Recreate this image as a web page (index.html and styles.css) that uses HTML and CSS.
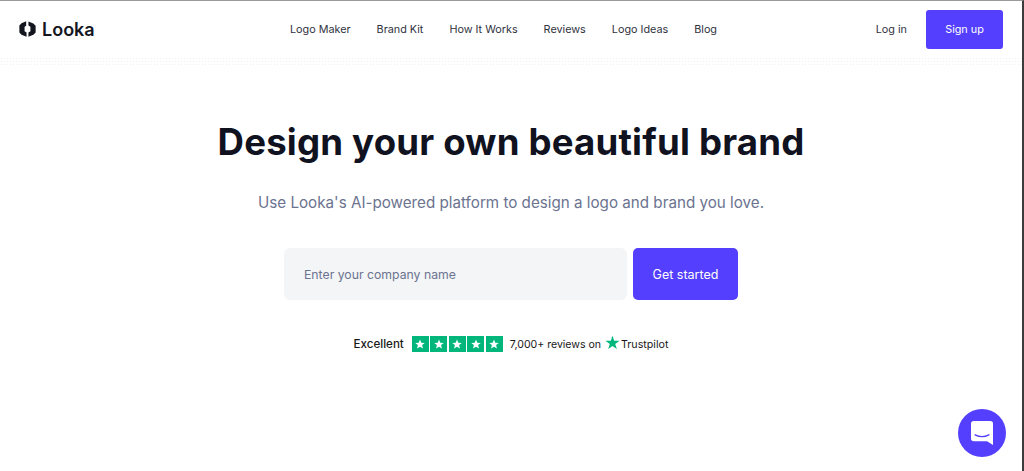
FILE: index.html
```html
<!DOCTYPE html>
<html>
<head>
    <title>Looka</title>
    <link rel="stylesheet" href="styles.css">
</head>
<body>
    <header class="topbar">
        <a class="brand" href="#">
            <svg class="brand-mark" viewBox="0 0 18 18" preserveAspectRatio="none">
                <path d="M7.6 .4V5.4L5.9 6.6V11.4L8 13V17.6L2.6 15.4L.4 12.8V5L2.6 2.6Z"/>
                <path d="M10 .6L15.2 2.8L17.6 5.4V12.8L15.2 15.4L10 17.6V13L12.1 11.4V6.6L10 5.2Z"/>
            </svg>
            <span>Looka</span>
        </a>
        <nav class="nav">
            <a href="#">Logo Maker</a>
            <a href="#">Brand Kit</a>
            <a href="#">How It Works</a>
            <a href="#">Reviews</a>
            <a href="#">Logo Ideas</a>
            <a href="#">Blog</a>
        </nav>
        <div class="account">
            <a href="#">Log in</a>
            <a class="signup" href="#">Sign up</a>
        </div>
    </header>
    <div class="dither"></div>

    <main class="hero">
        <h1>Design your own beautiful brand</h1>
        <p class="lead">Use Looka's AI-powered platform to design a logo and brand you love.</p>

        <form class="name-form">
            <input type="text" placeholder="Enter your company name">
            <button type="button">Get started</button>
        </form>

        <div class="reviews">
            <strong>Excellent</strong>
            <div class="stars">
                <span class="star-box"><svg viewBox="0 0 24 24"><path d="M12 3l2.6 6.3 6.9.5-5.3 4.4 1.7 6.7L12 17.3 6.1 20.9l1.7-6.7-5.3-4.4 6.9-.5z"/></svg></span>
                <span class="star-box"><svg viewBox="0 0 24 24"><path d="M12 3l2.6 6.3 6.9.5-5.3 4.4 1.7 6.7L12 17.3 6.1 20.9l1.7-6.7-5.3-4.4 6.9-.5z"/></svg></span>
                <span class="star-box"><svg viewBox="0 0 24 24"><path d="M12 3l2.6 6.3 6.9.5-5.3 4.4 1.7 6.7L12 17.3 6.1 20.9l1.7-6.7-5.3-4.4 6.9-.5z"/></svg></span>
                <span class="star-box"><svg viewBox="0 0 24 24"><path d="M12 3l2.6 6.3 6.9.5-5.3 4.4 1.7 6.7L12 17.3 6.1 20.9l1.7-6.7-5.3-4.4 6.9-.5z"/></svg></span>
                <span class="star-box"><svg viewBox="0 0 24 24"><path d="M12 3l2.6 6.3 6.9.5-5.3 4.4 1.7 6.7L12 17.3 6.1 20.9l1.7-6.7-5.3-4.4 6.9-.5z"/></svg></span>
            </div>
            <span class="count">7,000+ reviews on</span>
            <span class="trustpilot">
                <svg viewBox="0 0 24 24"><path d="M12 1l2.7 8.2h8.6l-7 5.1 2.7 8.2-7-5.1-7 5.1 2.7-8.2-7-5.1h8.6z"/></svg>
                Trustpilot
            </span>
        </div>
    </main>

    <button class="chat" type="button" aria-label="Chat">
        <svg viewBox="0 0 24 26">
            <path d="M3 0H21A3 3 0 0 1 24 3V26L17.5 22H3A3 3 0 0 1 0 19V3A3 3 0 0 1 3 0Z" fill="#fff"/>
            <path d="M4.5 15Q12 19 19.5 15" fill="none" stroke="#533ffd" stroke-width="1.5" stroke-linecap="round"/>
        </svg>
    </button>
</body>
</html>
```

FILE: styles.css
```css
* {
    box-sizing: border-box;
}

html, body {
    height: 100%;
}

body {
    margin: 0;
    overflow: hidden;
    background-color: #fff;
    border-top: 1px solid #9a9a9a;
    border-right: 2px solid #3c3c3c;
    color: #10121f;
    font-family: "Inter", "Noto Sans", sans-serif;
}

a {
    color: inherit;
    text-decoration: none;
}

.topbar {
    display: flex;
    align-items: center;
    height: 56px;
    padding: 0 19px;
}

.brand {
    display: flex;
    align-items: center;
    gap: 6px;
    width: 271px;
    font-size: 18px;
    font-weight: 600;
    color: #14161f;
}

.brand-mark {
    width: 17px;
    height: 16px;
    fill: #14161f;
}

.nav {
    display: flex;
    gap: 26px;
    font-size: 10.8px;
    color: #30323e;
}

.account {
    display: flex;
    align-items: center;
    gap: 19px;
    margin-left: auto;
    font-size: 10.8px;
    color: #30323e;
}

.signup {
    display: flex;
    align-items: center;
    justify-content: center;
    width: 77px;
    height: 39px;
    background-color: #533ffd;
    border-radius: 3px;
    color: #fff;
}

.dither {
    height: 10px;
    background-image: radial-gradient(#f0f0f0 0.5px, transparent 0.7px);
    background-size: 3px 3px;
}

.hero {
    display: flex;
    flex-direction: column;
    align-items: center;
    padding-top: 51px;
}

h1 {
    margin: 0;
    font-size: 36.6px;
    line-height: 48px;
    font-weight: 700;
    letter-spacing: 0.2px;
    color: #10121f;
}

.lead {
    margin: 25px 0 0;
    font-size: 15.2px;
    line-height: 24px;
    color: #6b7390;
}

.name-form {
    display: flex;
    gap: 6px;
    margin-top: 33px;
}

.name-form input {
    width: 343px;
    height: 52px;
    padding: 0 20px;
    border: 0;
    border-radius: 6px;
    background-color: #f4f5f7;
    font-family: inherit;
    font-size: 12.25px;
}

.name-form input::placeholder {
    color: #6b7390;
    opacity: 1;
}

.name-form button {
    width: 105px;
    height: 52px;
    border: 0;
    border-radius: 5px;
    background-color: #533ffd;
    color: #fff;
    font-family: inherit;
    font-size: 12.5px;
}

.reviews {
    display: flex;
    align-items: center;
    margin-top: 36px;
    font-size: 10.55px;
    color: #191919;
}

.reviews strong {
    font-size: 11.6px;
    font-weight: 500;
    margin-right: 8px;
}

.stars {
    display: flex;
    gap: 1.5px;
    margin-right: 7px;
}

.star-box {
    display: flex;
    align-items: center;
    justify-content: center;
    width: 17px;
    height: 16px;
    background-color: #00b67a;
}

.star-box svg {
    width: 12px;
    height: 12px;
    fill: #fff;
}

.trustpilot {
    display: flex;
    align-items: center;
    margin-left: 4px;
    font-size: 10.7px;
}

.trustpilot svg {
    width: 15px;
    height: 15px;
    margin: -3px 1px 0 0;
    fill: #00b67a;
}

.chat {
    position: absolute;
    left: 958px;
    top: 409px;
    display: flex;
    align-items: center;
    justify-content: center;
    width: 48px;
    height: 48px;
    padding: 0;
    border: 0;
    border-radius: 50%;
    background-color: #533ffd;
}

.chat svg {
    width: 22px;
    height: 24px;
}
```
